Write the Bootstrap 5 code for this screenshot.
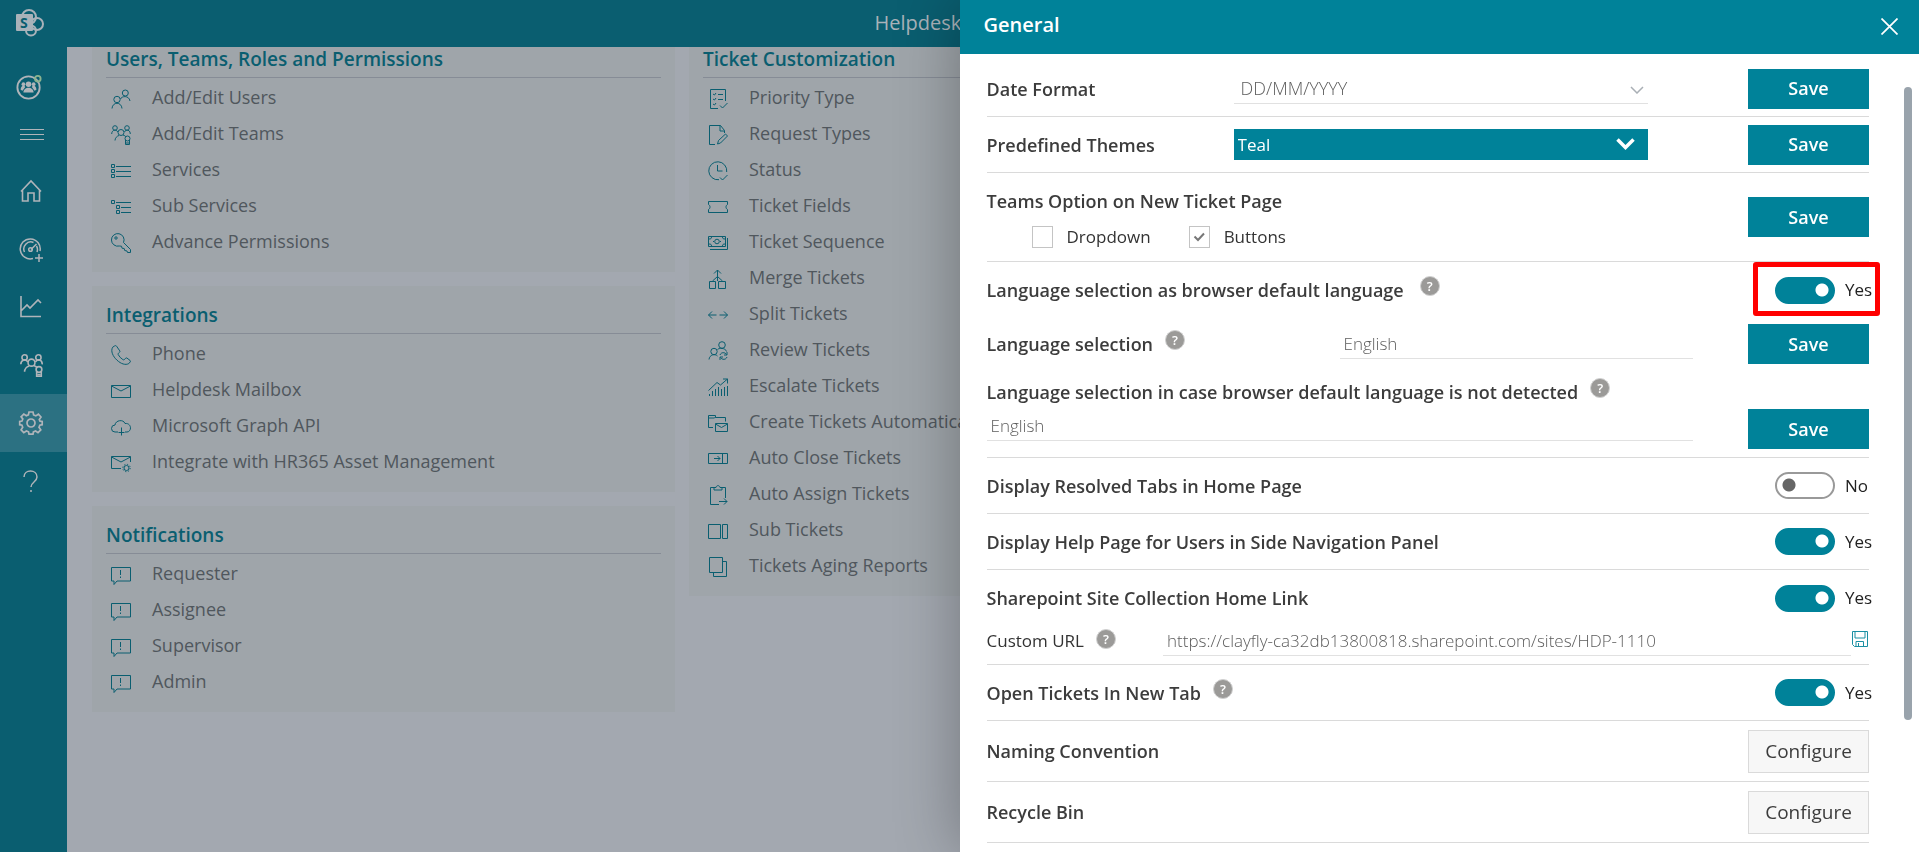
<!DOCTYPE html>
<html lang="en">
<head>
<meta charset="utf-8">
<meta name="viewport" content="width=device-width, initial-scale=1">
<title>Helpdesk 365 - General settings</title>
<link href="https://cdn.jsdelivr.net/npm/bootstrap@5.3.0/dist/css/bootstrap.min.css" rel="stylesheet">
<style>
:root{--teal:#008299;--teal-dim:#0a5e70;--page:#a3a8b0;--panel:#9fa5aa}
body{font-family:"Open Sans","Noto Sans",sans-serif;font-size:17px;line-height:24px;background:var(--page);height:100vh;overflow:hidden}
svg{fill:none;stroke:currentColor;display:block}
.topbar{height:47px;background:var(--teal-dim);color:#a9b2b9;font-size:20px}
.topbar .logo{left:16px;top:9px}
.app-title{width:170px;padding-bottom:2px}
.rail{width:67px;background:var(--teal-dim);color:#b0b4b9}
.rail a{color:inherit;height:58px}
.rail a.current{background:#2c7182}
.rail .me,.rail .burger{height:48px}
.rail .burger{margin-bottom:3px}
.board{display:grid;grid-template-columns:repeat(3,1fr);gap:14px;padding:0 50px 0 25px}
.board-col{display:grid;gap:14px}
.panel{background:var(--panel);padding:17px 14px 13px}
.panel.cut{padding-top:0}
.panel h2{font-size:19px;line-height:24px;font-weight:600;color:var(--teal-dim);padding-bottom:6px;border-bottom:1px solid #868c96;margin-bottom:1px}
.panel li a{height:36px;color:#50575d;gap:21px;padding-left:5px;font-size:18px;white-space:nowrap}
.panel li svg{color:var(--teal-dim);margin-top:4px;flex:none}
.offcanvas.drawer{--bs-offcanvas-width:50%;border:0;box-shadow:0 0 60px rgba(0,0,0,.3);color:#333;background:#fff;transition:none}
.drawer-head{height:54px;background:var(--teal);color:#fff;padding:0 21px 5px 24px}
.drawer-head h1{font-size:20px;line-height:28px;font-weight:600}
.drawer-head button{color:#fff;margin-top:4px}
.drawer-body{padding:7px 50px 0 27px;overflow:hidden}
.thumb{right:7px;top:87px;bottom:132px;width:8px;border-radius:4px;background:#99a3ac}
.line{min-height:56px;border-bottom:1px solid #dadada}
.line.tall{min-height:61px}
.line-part{height:56px}
.line-part.short{height:52px}
.cap{font-size:18px;font-weight:600;color:#3c3c3c}
.w-label{width:28%}
.w-field{width:47%}
.w-40{width:40%}
.w-80{width:80%}
.w-20{width:20%}
.field{border:0;border-bottom:1px solid #e1e1e1;border-radius:0;background-color:transparent;color:#5c5c5c;font-size:17px;font-weight:300;line-height:24px;padding:0 7px;height:30px;appearance:none;outline:0}
.field.wide{font-size:18px}
.field.near{padding-left:4px}
.field.under{margin-top:5px}
.field.themed{background:var(--teal);color:#fff;font-weight:400;height:31px;border:0}
.arrow{right:4px;top:12px;pointer-events:none;color:#a9afb5}
.arrow.bold{right:13px;top:9px;color:#fff}
.act,.act:hover{width:121px;height:40px;border:0;border-radius:0;background:var(--teal);color:#fff;font-size:18px;font-weight:600;padding:0}
.act.alt{height:43px;background:#f7f7f7;border:1px solid #dadada;color:#3c3c3c;font-size:19px;font-weight:400}
.tick{width:21px;height:22px;border:1px solid #c4c4c4;appearance:none;margin:0}
.tick:checked{background:url("data:image/svg+xml,%3Csvg xmlns='http://www.w3.org/2000/svg' viewBox='0 0 19 20'%3E%3Cpath d='M4.500 9.500l3.500 3.500 6-6.500' fill='none' stroke='%23777' stroke-width='2'/%3E%3C/svg%3E") center/100% no-repeat}
.choices{padding:12px 0 0 45px;gap:14px}
.switch{width:94px;gap:10px;color:#222;white-space:nowrap}
.switch input{flex:none;width:60px;height:27px;border:2px solid #999;border-radius:14px;appearance:none;margin:0;background:radial-gradient(circle at 12px 11px,#666 6px,transparent 7px)}
.switch input:checked{border-color:var(--teal);background:radial-gradient(circle at 45px 11px,#fff 6px,var(--teal) 7px)}
.hint{width:20px;height:20px;margin-left:12px;border-radius:50%;background:#9b9a98;color:#fff;font-size:13px;line-height:18px;font-weight:600;border:1px solid #d0d0d0;padding:0}
.marked{border:5px solid #f00;border-radius:3px;right:-11px;top:0;width:127px;height:54px;pointer-events:none}
.disk{color:#1a8fa3}
</style>
</head>
<body class="d-flex flex-column">
<svg width="0" height="0" class="position-absolute" aria-hidden="true">
<symbol id="users" viewBox="0 0 20 20"><circle cx="14.300" cy="4" r="3"/><circle cx="6" cy="10.500" r="3.200"/><path d="M9.500 10c1-3 8.500-4 9.500 2M1 19.500c.5-7 9.500-7 10 0"/></symbol>
<symbol id="teams" viewBox="0 0 20 20"><circle cx="4" cy="3" r="2.300"/><circle cx="16" cy="3" r="2.300"/><circle cx="10" cy="7.500" r="3"/><path d="M.7 9c0-4.500 5-5 6-2M13.500 7c1-3 6-2.500 5.800 2M4 15.500c0-2.500 2-4.500 4-5M12 10c1.500.5 2.500 1 3 2M14.500 15v4.500h4V15"/><circle cx="16.500" cy="13.500" r="2.500"/><path d="M15 18h3"/></symbol>
<symbol id="list" viewBox="0 0 20 20"><path d="M.5 3.500h3v3h-3zM.5 8.500h3v3h-3zM.5 13.500h3v3h-3zM5 5.500h15M5 10.500h15M5 15.500h15"/></symbol>
<symbol id="sublist" viewBox="0 0 20 20"><path d="M.5 3.500h3v3h-3zM5.500 8.500h3v3h-3zM5.500 13.500h3v3h-3zM5 5.500h15M10 10.500h10M10 15.500h10"/></symbol>
<symbol id="key" viewBox="0 0 20 20"><path d="M12.500 9.500A6.300 6.300 0 1 0 8.300 13l2.200.2.500 2 2.200.3.500 2 2.300.5.500 1.500h3v-3z"/><circle cx="5" cy="5" r="1.200"/></symbol>
<symbol id="phone" viewBox="0 0 20 20"><path d="M3.500 1 1.700 2.200C-.7 6 2 11.500 6 15.200s8.500 5.200 11.800 3.400l1.500-1.800c.4-.6.200-1-.3-1.400l-3-2.300c-.6-.4-1-.3-1.500.2l-1 1.200c-.5.500-1 .5-1.600.1-2-1.200-3.600-3-4.700-5-.3-.6-.2-1 .3-1.400l1-.9c.5-.4.6-.8.3-1.400L5.700 1.400C5.200.4 4.300.5 3.500 1z"/></symbol>
<symbol id="mail" viewBox="0 0 20 20"><path d="M.5 4.500h19v12H.5zM.5 5l9.500 5 9.500-5"/></symbol>
<symbol id="cloud" viewBox="0 0 20 20"><path d="M7 15H4a3.500 3.500 0 0 1 0-7c.5-5 8.500-6 10-1.500C18 6 19.500 9 19.500 11S18 15 16 15h-2M10.500 10.500v8M7.500 15.500h6"/></symbol>
<symbol id="mailgear" viewBox="0 0 20 20"><path d="M10 15.500H.5v-12h19V9M.5 4l9.500 5 9.500-5"/><circle cx="15.500" cy="15" r="2.500"/><circle cx="15.500" cy="15" r="3.700" stroke-dasharray="1.300 1.600"/></symbol>
<symbol id="alert" viewBox="0 0 20 20"><path d="M.5 2.500h19v13.500H6L3 19.500V16H.5zM9.500 5v5M9.500 11.500V13"/></symbol>
<symbol id="priority" viewBox="0 0 20 20"><path d="M10 19.500H2.500v-19h15V12M5 5l1.500 1L8 4M5 10l1.500 1L8 9M5 15l1.500 1L8 14M10 5.500h5M10 10.500h5M12 16.500l2.500 2.500 5-5"/></symbol>
<symbol id="request" viewBox="0 0 20 20"><path d="M7 19.500H1.500V.5h11l4 5V8M12 .5V6h4.500M9.500 19l1-3.500 7-6.500 2 2-7 7z"/></symbol>
<symbol id="status" viewBox="0 0 20 20"><path d="M11 18.700A9 9 0 1 1 18.700 11M9.500 4v6h5M12 16.500l2.500 2.500 5-5"/></symbol>
<symbol id="ticket" viewBox="0 0 20 20"><path d="M.5 4.500h19v3c-2 1-2 4 0 5v3H.5v-3c2-1 2-4 0-5z"/></symbol>
<symbol id="money" viewBox="0 0 20 20"><path d="M.5 3.500h17v10H.5zM2 16.500h17.500V5M1 6c2 0 2.500-.5 2.500-2M17 6c-2 0-2.500-.5-2.500-2M1 11c2 0 2.500.5 2.500 2M17 11c-2 0-2.500.5-2.500 2M5 8.500h1M12 8.500h1"/><circle cx="9" cy="8.500" r="2.300"/></symbol>
<symbol id="merge" viewBox="0 0 20 20"><path d="M1.500 12.500h6v7h-6zM10.500 12.500h7v7h-7zM9.500 12V1M6 4.500 9.500 1 13 4.500M4.500 12l5-4.500 5 4.500"/></symbol>
<symbol id="split" viewBox="0 0 20 20"><path d="M8.500 10h-8M4 6.500.5 10 4 13.500M11.500 10h8M16 6.500l3.500 3.500-3.500 3.500"/></symbol>
<symbol id="review" viewBox="0 0 20 20"><circle cx="14" cy="4" r="3.300"/><circle cx="6" cy="10.500" r="3.200"/><path d="M9.500 8.500c1-1.500 8-2 9 2M1 18.500c.5-5 6-6 8.500-3.500M12 14c1-3 5-3 6.500-.5M19 11v3h-3M19 16c-1 3-5 3-6.500.5M12 19v-3h3"/></symbol>
<symbol id="escalate" viewBox="0 0 20 20"><path d="M.5 13.500 9 5.500l3.500 2.500L19.500 2M15 2h4.500v4.500M1.500 19v-2M4.500 19v-5M7.500 19v-7M10.500 19V10M13.500 19v-7M16.500 19v-9M19.500 19V9"/></symbol>
<symbol id="create" viewBox="0 0 20 20"><path d="M5 14.500H.5v-12h7v2h10v4M.5 5h6l1-1M7.500 10.500h12v8h-12zM7.500 11l6 3.500 6-3.500"/></symbol>
<symbol id="close-t" viewBox="0 0 20 20"><path d="M.5 4.500h19v10H.5zM14.500 4.500v10M6 9.500h6M9.500 7l2.500 2.500L9.500 12"/></symbol>
<symbol id="assign" viewBox="0 0 20 20"><path d="M11 19.500H2.500v-17H6V5h8V2.500h3.500V13M6 2.500h2c.5-2.500 3.500-2.500 4 0h2M11 16.500h8M16 13.500l3 3-3 3"/></symbol>
<symbol id="sub" viewBox="0 0 20 20"><path d="M.5 3.500h12v14H.5zM14.500 3.500h5v14h-5z"/></symbol>
<symbol id="aging" viewBox="0 0 20 20"><path d="M1.500.5h13v15h-13zM14.500 4.500h4v15h-13v-4"/></symbol>
</svg>

<header class="topbar position-relative d-flex justify-content-center align-items-center">
  <svg class="logo position-absolute" width="28" height="28" viewBox="0 0 28 28" aria-label="SharePoint"><g stroke-width="2"><circle cx="13" cy="8" r="7"/><circle cx="21" cy="15" r="6"/><circle cx="15" cy="21.500" r="5"/></g><rect x="0" y="5" width="17" height="17" rx="1" fill="#a9b2b9" stroke="none"/><text x="4" y="18.500" font-size="14" font-weight="700" fill="#0a5e70" stroke="none">S</text></svg>
  <span class="app-title">Helpdesk</span>
</header>

<div class="d-flex flex-grow-1 overflow-hidden">
<nav class="rail d-flex flex-column flex-shrink-0 pt-3" aria-label="Main">
  <div class="me d-flex align-items-center ps-3"><svg width="26" height="28" viewBox="0 0 28 28" aria-hidden="true"><circle cx="13.500" cy="14.500" r="12" stroke-width="2"/><g fill="currentColor" stroke="none"><circle cx="13.500" cy="11" r="3"/><circle cx="8" cy="11" r="2"/><circle cx="19" cy="11" r="2"/><path d="M8 20c0-7 11-7 11 0zM5 17c0-5 4-5 5-3l-3 4zM22 17c0-5-4-5-5-3l3 4z"/></g><circle cx="23.500" cy="5" r="3" stroke="#8cb38f" stroke-width="2"/></svg></div>
  <div class="burger d-flex align-items-center"><svg class="ms-3" width="32" height="14" viewBox="0 0 32 14" aria-hidden="true"><path d="M4 1.500h24M4 6.500h24M4 11.500h24"/></svg></div>
  <a href="#" class="d-flex align-items-center ps-3" aria-label="Home"><svg width="30" height="26" viewBox="0 0 30 26" stroke-width="1.600"><path d="M5 13.500 15 3l10 10.500M6.500 12v11H12v-8h6v8h5.500V12"/></svg></a>
  <a href="#" class="d-flex align-items-center ps-3" aria-label="Dashboard"><svg width="30" height="26" viewBox="0 0 30 26" stroke-width="1.500"><path d="M17 22.500A10 10 0 1 1 24 15M8.500 16a7 7 0 0 1 9-9.500M20.500 10a7 7 0 0 1 .5 6M15 13.500l5.500-5.500M23 18v8M19 22h8"/><circle cx="14.500" cy="13.500" r="1.800"/></svg></a>
  <a href="#" class="d-flex align-items-center ps-3" aria-label="Reports"><svg width="30" height="26" viewBox="0 0 30 26" stroke-width="1.600"><path d="M5 2v20.500h20M5 17l6-6 3 3 8-8 3 3"/></svg></a>
  <a href="#" class="d-flex align-items-center ps-3" aria-label="Teams"><svg class="ms-1" width="23" height="23" stroke-width="1.400"><use href="#teams"/></svg></a>
  <a href="#" class="current d-flex align-items-center ps-3" aria-label="Settings"><svg width="30" height="26" viewBox="-15 -13 30 26" stroke-width="1.700"><path d="M-2-11h4l.6 3 2.200.9L7.400-8.800l2.600 2.800-1.700 2.600L9-1.800l2.200.3v3.200L8.800 2.200 8 4.300 9.800 6.800 7 9.700 4.600 8l-2.200.9L2 11.200h-4l-.5-2.400L-4.600 8-7.200 9.600-9.900 6.800-8.300 4.300-9 2.200l-2.300-.5v-3.200L-9-2l.8-2L-9.900-6.200l2.700-2.700 2.500 1.700 2.100-.9z"/><circle r="4"/></svg></a>
  <a href="#" class="d-flex align-items-center ps-3" aria-label="Help"><svg width="28" height="26" viewBox="0 0 28 26" stroke-width="1.500"><path d="M8 9c0-8 13-8 13 0 0 5-6 5-6 10M15 22v2"/></svg></a>
</nav>

<main class="board flex-grow-1 align-items-start">
  <div class="board-col">
    <section class="panel cut"><h2>Users, Teams, Roles and Permissions</h2>
      <ul class="list-unstyled mb-0">
        <li><a href="#" class="d-flex align-items-center text-decoration-none"><svg width="20" height="20"><use href="#users"/></svg>Add/Edit Users</a></li>
        <li><a href="#" class="d-flex align-items-center text-decoration-none"><svg width="20" height="20"><use href="#teams"/></svg>Add/Edit Teams</a></li>
        <li><a href="#" class="d-flex align-items-center text-decoration-none"><svg width="20" height="20"><use href="#list"/></svg>Services</a></li>
        <li><a href="#" class="d-flex align-items-center text-decoration-none"><svg width="20" height="20"><use href="#sublist"/></svg>Sub Services</a></li>
        <li><a href="#" class="d-flex align-items-center text-decoration-none"><svg width="20" height="20"><use href="#key"/></svg>Advance Permissions</a></li>
      </ul></section>
    <section class="panel"><h2>Integrations</h2>
      <ul class="list-unstyled mb-0">
        <li><a href="#" class="d-flex align-items-center text-decoration-none"><svg width="20" height="20"><use href="#phone"/></svg>Phone</a></li>
        <li><a href="#" class="d-flex align-items-center text-decoration-none"><svg width="20" height="20"><use href="#mail"/></svg>Helpdesk Mailbox</a></li>
        <li><a href="#" class="d-flex align-items-center text-decoration-none"><svg width="20" height="20"><use href="#cloud"/></svg>Microsoft Graph API</a></li>
        <li><a href="#" class="d-flex align-items-center text-decoration-none"><svg width="20" height="20"><use href="#mailgear"/></svg>Integrate with HR365 Asset Management</a></li>
      </ul></section>
    <section class="panel"><h2>Notifications</h2>
      <ul class="list-unstyled mb-0">
        <li><a href="#" class="d-flex align-items-center text-decoration-none"><svg width="20" height="20"><use href="#alert"/></svg>Requester</a></li>
        <li><a href="#" class="d-flex align-items-center text-decoration-none"><svg width="20" height="20"><use href="#alert"/></svg>Assignee</a></li>
        <li><a href="#" class="d-flex align-items-center text-decoration-none"><svg width="20" height="20"><use href="#alert"/></svg>Supervisor</a></li>
        <li><a href="#" class="d-flex align-items-center text-decoration-none"><svg width="20" height="20"><use href="#alert"/></svg>Admin</a></li>
      </ul></section>
  </div>
  <section class="panel cut"><h2>Ticket Customization</h2>
    <ul class="list-unstyled mb-0">
      <li><a href="#" class="d-flex align-items-center text-decoration-none"><svg width="20" height="20"><use href="#priority"/></svg>Priority Type</a></li>
      <li><a href="#" class="d-flex align-items-center text-decoration-none"><svg width="20" height="20"><use href="#request"/></svg>Request Types</a></li>
      <li><a href="#" class="d-flex align-items-center text-decoration-none"><svg width="20" height="20"><use href="#status"/></svg>Status</a></li>
      <li><a href="#" class="d-flex align-items-center text-decoration-none"><svg width="20" height="20"><use href="#ticket"/></svg>Ticket Fields</a></li>
      <li><a href="#" class="d-flex align-items-center text-decoration-none"><svg width="20" height="20"><use href="#money"/></svg>Ticket Sequence</a></li>
      <li><a href="#" class="d-flex align-items-center text-decoration-none"><svg width="20" height="20"><use href="#merge"/></svg>Merge Tickets</a></li>
      <li><a href="#" class="d-flex align-items-center text-decoration-none"><svg width="20" height="20"><use href="#split"/></svg>Split Tickets</a></li>
      <li><a href="#" class="d-flex align-items-center text-decoration-none"><svg width="20" height="20"><use href="#review"/></svg>Review Tickets</a></li>
      <li><a href="#" class="d-flex align-items-center text-decoration-none"><svg width="20" height="20"><use href="#escalate"/></svg>Escalate Tickets</a></li>
      <li><a href="#" class="d-flex align-items-center text-decoration-none"><svg width="20" height="20"><use href="#create"/></svg>Create Tickets Automatically</a></li>
      <li><a href="#" class="d-flex align-items-center text-decoration-none"><svg width="20" height="20"><use href="#close-t"/></svg>Auto Close Tickets</a></li>
      <li><a href="#" class="d-flex align-items-center text-decoration-none"><svg width="20" height="20"><use href="#assign"/></svg>Auto Assign Tickets</a></li>
      <li><a href="#" class="d-flex align-items-center text-decoration-none"><svg width="20" height="20"><use href="#sub"/></svg>Sub Tickets</a></li>
      <li><a href="#" class="d-flex align-items-center text-decoration-none"><svg width="20" height="20"><use href="#aging"/></svg>Tickets Aging Reports</a></li>
    </ul></section>
</main>
</div>

<aside class="offcanvas offcanvas-end show drawer" data-bs-backdrop="false" tabindex="-1" aria-labelledby="drawerTitle">
  <div class="drawer-head d-flex justify-content-between align-items-center flex-shrink-0">
    <h1 id="drawerTitle" class="mb-0">General</h1>
    <button type="button" class="btn p-0 border-0" aria-label="Close"><svg width="17" height="17" viewBox="0 0 17 17" stroke-width="1.700"><path d="M.5.5l16 16M16.500.5l-16 16"/></svg></button>
  </div>
  <div class="drawer-body flex-grow-1">
    <div class="line d-flex align-items-center">
      <label class="cap w-label" for="date">Date Format</label>
      <div class="w-field position-relative"><select id="date" class="field wide w-100"><option>DD/MM/YYYY</option></select><svg class="arrow position-absolute" width="14" height="8" viewBox="0 0 14 8" stroke-width="1.500"><path d="M1 1l6 6 6-6"/></svg></div>
      <button type="button" class="btn act ms-auto">Save</button>
    </div>
    <div class="line d-flex align-items-center">
      <label class="cap w-label" for="theme">Predefined Themes</label>
      <div class="w-field position-relative"><select id="theme" class="field near themed w-100 d-block"><option>Teal</option></select><svg class="arrow bold position-absolute" width="19" height="12" viewBox="0 0 19 12" stroke-width="3.500"><path d="M1.500 1.500l8 8 8-8"/></svg></div>
      <button type="button" class="btn act ms-auto">Save</button>
    </div>
    <div class="line d-flex align-items-center py-2">
      <div class="pt-2 pb-1">
        <div class="cap">Teams Option on New Ticket Page</div>
        <div class="choices d-flex align-items-center">
          <input class="tick" type="checkbox" id="dd"><label for="dd" class="me-4">Dropdown</label>
          <input class="tick" type="checkbox" id="bt" checked><label for="bt">Buttons</label>
        </div>
      </div>
      <button type="button" class="btn act ms-auto">Save</button>
    </div>
    <div class="line pb-1">
      <div class="line-part d-flex align-items-center position-relative">
        <label class="cap" for="s1">Language selection as browser default language</label><button type="button" class="hint ms-3 mb-2" aria-label="Help">?</button>
        <div class="switch d-flex align-items-center ms-auto"><input type="checkbox" role="switch" id="s1" checked><label for="s1">Yes</label></div>
        <div class="marked position-absolute"></div>
      </div>
      <div class="line-part short d-flex align-items-center">
        <div class="w-40 d-flex align-items-center"><label class="cap" for="lang">Language selection</label><button type="button" class="hint mb-2" aria-label="Help">?</button></div>
        <select id="lang" class="field near w-40"><option>English</option></select>
        <button type="button" class="btn act ms-auto">Save</button>
      </div>
      <div class="d-flex align-items-end pb-1">
        <div class="w-80 pt-2 pb-2">
          <div class="d-flex align-items-center"><label class="cap" for="lang2">Language selection in case browser default language is not detected</label><button type="button" class="hint mb-2" aria-label="Help">?</button></div>
          <select id="lang2" class="field near under w-100 d-block"><option>English</option></select>
        </div>
        <button type="button" class="btn act ms-auto">Save</button>
      </div>
    </div>
    <div class="line d-flex align-items-center"><label class="cap" for="s2">Display Resolved Tabs in Home Page</label>
      <div class="switch d-flex align-items-center ms-auto"><input type="checkbox" role="switch" id="s2"><label for="s2">No</label></div></div>
    <div class="line d-flex align-items-center"><label class="cap" for="s3">Display Help Page for Users in Side Navigation Panel</label>
      <div class="switch d-flex align-items-center ms-auto"><input type="checkbox" role="switch" id="s3" checked><label for="s3">Yes</label></div></div>
    <div class="line pb-2">
      <div class="line-part d-flex align-items-center"><label class="cap" for="s4">Sharepoint Site Collection Home Link</label>
        <div class="switch d-flex align-items-center ms-auto"><input type="checkbox" role="switch" id="s4" checked><label for="s4">Yes</label></div></div>
      <div class="d-flex align-items-center">
        <div class="w-20 d-flex align-items-center"><label for="url">Custom URL</label><button type="button" class="hint mb-1" aria-label="Help">?</button></div>
        <input id="url" type="text" class="field near flex-grow-1" value="https://clayfly-ca32db13800818.sharepoint.com/sites/HDP-1110">
        <button type="button" class="btn p-0 pb-1 border-0" aria-label="Save URL"><svg class="disk" width="18" height="18" viewBox="0 0 18 18"><path d="M1.500 1.500h15v15h-13l-2-2zM4 1.500v6.500h10V1.500M5 16.500v-5h7.500v5M7.500 16.500V13"/></svg></button>
      </div>
    </div>
    <div class="line d-flex align-items-center"><label class="cap" for="s5">Open Tickets In New Tab</label><button type="button" class="hint mb-2" aria-label="Help">?</button>
      <div class="switch d-flex align-items-center ms-auto"><input type="checkbox" role="switch" id="s5" checked><label for="s5">Yes</label></div></div>
    <div class="line tall d-flex align-items-center"><span class="cap">Naming Convention</span><button type="button" class="btn act alt ms-auto">Configure</button></div>
    <div class="line tall d-flex align-items-center"><span class="cap">Recycle Bin</span><button type="button" class="btn act alt ms-auto">Configure</button></div>
  </div>
  <div class="thumb position-absolute"></div>
</aside>
<script src="https://cdn.jsdelivr.net/npm/bootstrap@5.3.0/dist/js/bootstrap.bundle.min.js"></script>
</body>
</html>
